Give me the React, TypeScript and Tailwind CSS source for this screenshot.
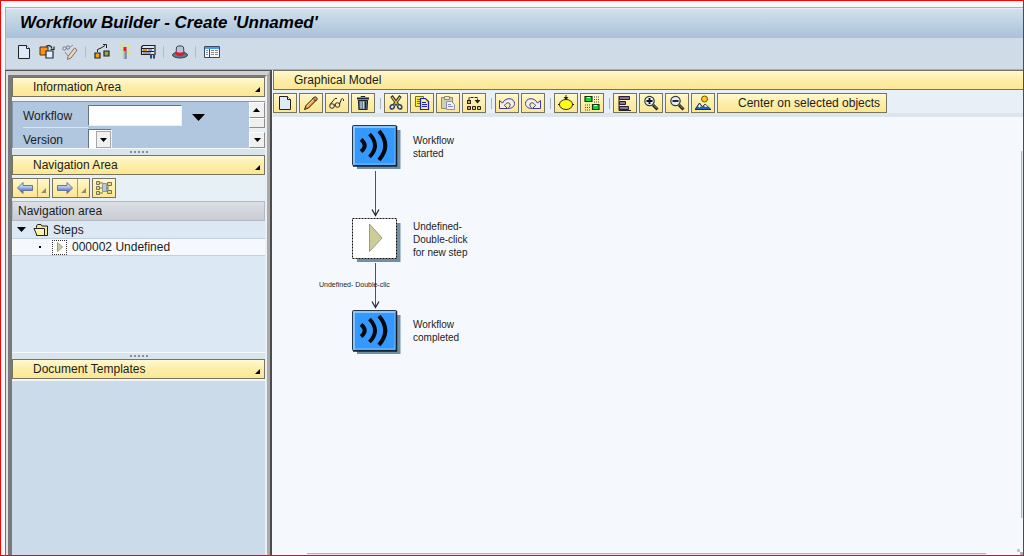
import React, { useState } from 'react';

interface IconProps {
  children: React.ReactNode;
  size?: number;
}

function Icon({ children, size = 16 }: IconProps) {
  return (
    <svg width={size} height={size} viewBox="0 0 16 16" fill="none" className="shrink-0" aria-hidden="true">
      {children}
    </svg>
  );
}

/* ---------- Icons ---------- */

const NewDocIcon = ({ size = 16 }: { size?: number }) => (
  <Icon size={size}>
    <path d="M2.5 1.5h8l3 3v10h-11z" fill="#dceafa" stroke="#222" />
    <path d="M10.5 1.5v3h3" fill="#fff" stroke="#222" />
  </Icon>
);

const OtherObjectIcon = () => (
  <Icon>
    <path d="M1 3h8v8H1z" fill="#f7931e" stroke="#5a3200" />
    <path d="M7 7h7v7H7z" fill="#e3effc" stroke="#1d2b45" strokeWidth="1.2" />
    <path d="M7 2.5c2-1.500 5-1.500 6 2M15 2.500v3h-3.500" stroke="#222" strokeWidth="1.2" />
  </Icon>
);

const DisplayChangeIcon = () => (
  <Icon>
    <circle cx="2.5" cy="4.5" r="1.700" stroke="#777c82" />
    <circle cx="6" cy="3.500" r="1.700" stroke="#777c82" />
    <path d="M6 12.500 12.500 4l2.500 2L9 14l-3.500 1.500z" fill="#f2d6b5" stroke="#77726d" />
    <path d="M3 8l3 4M8 3l3-2" stroke="#8a8a8a" />
  </Icon>
);

const ActivateIcon = () => (
  <Icon>
    <path d="M1 9h5v5H1z" fill="#f7a11e" stroke="#222" strokeWidth="1.2" />
    <path d="M10 7h5v5h-5z" fill="#8fae4a" stroke="#222" strokeWidth="1.2" />
    <path d="M3.500 8V5.500L7 4l4-2.500M9 .500h3.500V4" stroke="#222" />
  </Icon>
);

const WandIcon = () => (
  <Icon>
    <path d="M3 1l3 3M13 1l-3 3M3 10l3-3M13 10l-3-3M1.500 5.500H5M11 5.500h3.500M8 0v2" stroke="#ecec2c" strokeWidth="1.2" />
    <path d="M6.500 3h3v4h-3z" fill="#f01818" />
    <path d="M6.500 7h3v8h-3z" fill="#9db0bd" />
    <path d="M9 7v8" stroke="#5a6c7a" />
  </Icon>
);

const TestIcon = () => (
  <Icon>
    <path d="M3 1.500h12v9H1.500V3z" fill="#dbe6f2" stroke="#222" strokeWidth="1.2" />
    <path d="M2 4.500h12M2 7.500h12" stroke="#222" />
    <path d="M3 5h4v2H3z" fill="#f28c1c" />
    <path d="M8 5h4v2H8z" fill="#8d9fc4" />
    <path d="M3 9h8" stroke="#556" />
    <path d="M11 10v4.500M14 10v4.500" stroke="#35456b" strokeWidth="2" />
  </Icon>
);

const HatIcon = () => (
  <Icon>
    <ellipse cx="8" cy="11" rx="7.500" ry="3" fill="#68748c" stroke="#3b4459" />
    <path d="M4 9.500 4.500 3c1-1.500 6-1.500 7 0l.500 6.500c-1 2-7 2-8 0z" fill="#b9c4d6" stroke="#3b4459" />
    <path d="M4 7.500c2 1.500 6 1.500 8 0v3c-2 1.500-6 1.500-8 0z" fill="#d8202c" />
  </Icon>
);

const LayoutIcon = () => (
  <Icon>
    <path d="M.500 2.500h15v11H.500z" fill="#f7fafc" stroke="#334a66" />
    <path d="M1 3h14v2H1z" fill="#4aa0e6" />
    <path d="M5.500 5v8" stroke="#334a66" />
    <path d="M2 6.500h2M2 8.500h2M2 10.500h2M7 6.500h3M11 6.500h3M7 8.500h3M11 8.500h3M7 10.500h3M11 10.500h3" stroke="#888" />
  </Icon>
);

const PencilIcon = () => (
  <Icon>
    <path d="M1.500 14.500 3 10.500l8-8L13.500 5l-8 8z" fill="#f5a23a" stroke="#2b1c10" />
    <path d="M10 3.500 11.500 2c1-1 3.500 1.500 2.500 2.500L12.500 6z" fill="#e0907a" stroke="#2b1c10" />
    <path d="M4 11l6.500-6.500" stroke="#ffe1a3" />
  </Icon>
);

const GlassesIcon = () => (
  <Icon>
    <circle cx="3" cy="11" r="2.300" stroke="#2b2b2b" />
    <circle cx="8.500" cy="10" r="2.300" stroke="#2b2b2b" />
    <path d="M1 9.500 6 3.500h2M5 10h1M10.500 9l2-5c1-1 2.500 0 2 2" stroke="#2b2b2b" />
  </Icon>
);

const TrashIcon = () => (
  <Icon>
    <path d="M3.500 5.500h9l-.500 9h-8z" fill="#6c7a8e" stroke="#1c2430" strokeWidth="1.2" />
    <path d="M2 3.500h12" stroke="#1c2430" strokeWidth="2" />
    <path d="M6 2V1.500h4V2" stroke="#1c2430" />
    <path d="M6 6.500v7M8.500 6.500v7" stroke="#c9d4df" />
    <path d="M10.500 6.500v7" stroke="#1c2430" />
  </Icon>
);

const ScissorsIcon = () => (
  <Icon>
    <path d="M3.500 1 10 10M12.500 1 6 10" stroke="#333" strokeWidth="3" />
    <path d="M4 2l5.500 7.500M12 2 6.500 9.500" stroke="#e8cf3a" strokeWidth="1.200" />
    <path d="M6 10c-3-1-4.500 1-3.500 3.500 2.500 1.500 4-.500 4-3M10 10c3-1 4.500 1 3.500 3.500-2.500 1.500-4-.500-4-3" stroke="#24407e" strokeWidth="1.600" />
  </Icon>
);

const CopyIcon = () => (
  <Icon>
    <path d="M1.500 1.500h8v10h-8z" fill="#f5ee35" stroke="#77731a" />
    <path d="M3 4.500h3M3 6.500h3M3 8.500h3" stroke="#77731a" />
    <path d="M6.500 3.500h5l3 3v8h-8z" fill="#f7f07a" stroke="#2222b0" strokeWidth="1.2" />
    <path d="M8 7.500h4M8 9.500h5M8 11.500h5" stroke="#2222b0" />
  </Icon>
);

const PasteIcon = () => (
  <Icon>
    <path d="M1.500 2.500h11v11h-11z" fill="#d2cfae" stroke="#8d8a70" />
    <path d="M4.500 1.500h5v3h-5z" fill="#ece8cf" stroke="#8d8a70" />
    <path d="M6.500 6.500h5l3 3v5h-8z" fill="#eef0f5" stroke="#8a8dc4" />
    <path d="M8 9.500h3M8 11.500h5" stroke="#8a8dc4" />
  </Icon>
);

const InsertStepsIcon = () => (
  <Icon>
    <path d="M3 5V2.500h8.500V6" stroke="#222" strokeDasharray="3 1" />
    <path d="M8.500 5h6l-3 3.500z" fill="#222" />
    <path d="M1 5h4v4H1z" fill="#222" />
    <path d="M2 6h2v2H2z" fill="#f3a52b" />
    <path d="M1.500 11.500h3v3h-3z" fill="#f7931e" stroke="#222" />
    <path d="M6.500 11.500h3v3h-3zM11.500 11.500h3v3h-3z" fill="#c9d66a" stroke="#222" />
  </Icon>
);

const undoPath = 'M.500 5.500v8h8L5.500 10.500C7 7.500 10 7 11 9c.500 1.500-.500 3-2 4.500 4 0 6.500-2 6.500-5C15.500 3.500 7.500 1 3.500 8z';

const UndoIcon = () => (
  <Icon>
    <path d={undoPath} fill="#f3efe6" stroke="#3a3a94" />
  </Icon>
);

const RedoIcon = () => (
  <Icon>
    <g transform="matrix(-1 0 0 1 16 0)">
      <path d={undoPath} fill="#f3efe6" stroke="#3a3a94" />
    </g>
  </Icon>
);

const NodeIcon = () => (
  <Icon>
    <ellipse cx="8" cy="9.500" rx="6.500" ry="5" fill="#ffff10" stroke="#222" />
    <path d="M0 9.500h2M14 9.500h2M8 0v4" stroke="#222" />
    <path d="M5.500 2h5L8 5z" fill="#222" />
  </Icon>
);

const BlocksIcon = () => (
  <Icon>
    <path d="M1 1.500h7v5H1z" fill="#18d32c" stroke="#12351a" strokeWidth="1.2" />
    <path d="M8.500 9.500h6.500v5H8.500z" fill="#18d32c" stroke="#12351a" strokeWidth="1.2" />
    <path d="M3 2.500h3M10 10.500h3" stroke="#d9ffd9" />
    <path d="M10 2h6M10 4.500h6M10 7h6M1 10h6M1 12.500h6M1 15h6" stroke="#444" strokeDasharray="1 1" />
  </Icon>
);

const AlignIcon = () => (
  <Icon>
    <path d="M2 1v14.500h12" stroke="#222" />
    <path d="M2.500 1.500h10v3h-10zM2.500 6.500h6v3h-6zM2.500 11.500h9v3h-9z" fill="#8b7496" stroke="#2b1f33" />
  </Icon>
);

const ZoomIcon = ({ plus }: { plus?: boolean }) => (
  <Icon>
    <path d="M10 10l4.500 4.500" stroke="#222" strokeWidth="3" />
    <path d="M11 10.500l3 3" stroke="#b09a5c" />
    <circle cx="6.500" cy="6" r="4.700" fill="#e6eef7" stroke="#33383f" strokeWidth="1.2" />
    <path d={plus ? 'M3.500 6h6M6.500 3v6' : 'M3.500 6h6'} stroke="#111" strokeWidth="1.800" />
  </Icon>
);

const OverviewIcon = () => (
  <Icon>
    <circle cx="9.500" cy="4" r="3" fill="#ffcf1f" stroke="#75510a" />
    <path d="M0 14.500 4.500 8l3 4 2.500-3 6 5.500z" fill="#2465a8" stroke="#15314f" />
    <path d="M3 11.500 4.500 9l2.500 3.500-1.500-1-1 1zM9 11l1-1.500 2.500 2-2 .500z" fill="#fff" />
  </Icon>
);

const ArrowIcon = ({ left }: { left?: boolean }) => (
  <Icon>
    <defs>
      <linearGradient id={left ? 'arrow-l' : 'arrow-r'} x1="0" y1="0" x2="0" y2="1">
        <stop offset="0.3" stopColor="#bfe0f5" />
        <stop offset="0.8" stopColor="#5b62d6" />
      </linearGradient>
    </defs>
    <path
      d={left ? 'M.500 8 6 2.500v3h9.500v5H6v3z' : 'M15.500 8 10 2.500v3H.500v5H10v3z'}
      fill={left ? 'url(#arrow-l)' : 'url(#arrow-r)'}
      stroke="#6a7390"
    />
  </Icon>
);

const HierarchyIcon = () => (
  <Icon>
    <path d="M4 3h3M4 8h3M4 13h3M10 8h2M12 4v9" stroke="#77735a" />
    <path d="M.500 1.500h3v3h-3zM.500 6.500h3v3h-3zM.500 11.500h3v3h-3zM11.500 2.500h4v3h-4zM11.500 10.500h4v3h-4z" fill="#ead98a" stroke="#77735a" />
    <path d="M6.500 3.500h4v8h-4z" fill="#b8c8d8" stroke="#8b96a3" />
  </Icon>
);

const FolderIcon = () => (
  <Icon>
    <path d="M3.500 5.500V3.500L5 2.500h3l1 1.500h5.500v9.500h-11z" fill="#f6e890" stroke="#222" />
    <path d="M1 6.500h10.500v7H4z" fill="#fff6a5" stroke="#222" />
  </Icon>
);

const DownTriangle = ({ width = 7, height = 4 }: { width?: number; height?: number }) => (
  <svg width={width} height={height} viewBox="0 0 8 4" preserveAspectRatio="none" aria-hidden="true">
    <path d="M0 0h8L4 4z" fill="#000" />
  </svg>
);

const Corner = ({ color = '#000' }: { color?: string }) => (
  <svg width="5" height="5" viewBox="0 0 5 5" aria-hidden="true">
    <path d="M5 0v5H0z" fill={color} />
  </svg>
);

/* ---------- Data ---------- */

interface Tool {
  label: string;
  icon: React.ReactNode;
}

const appTools: Tool[][] = [
  [
    { label: 'Create', icon: <NewDocIcon /> },
    { label: 'Other workflow', icon: <OtherObjectIcon /> },
    { label: 'Display/Change', icon: <DisplayChangeIcon /> },
  ],
  [
    { label: 'Check', icon: <ActivateIcon /> },
    { label: 'Activate', icon: <WandIcon /> },
    { label: 'Test', icon: <TestIcon /> },
  ],
  [{ label: 'Basic data', icon: <HatIcon /> }],
  [{ label: 'Layout', icon: <LayoutIcon /> }],
];

const modelTools: Tool[][] = [
  [
    { label: 'Create step', icon: <NewDocIcon /> },
    { label: 'Change step', icon: <PencilIcon /> },
    { label: 'Display step', icon: <GlassesIcon /> },
    { label: 'Delete', icon: <TrashIcon /> },
  ],
  [
    { label: 'Cut', icon: <ScissorsIcon /> },
    { label: 'Copy', icon: <CopyIcon /> },
    { label: 'Paste', icon: <PasteIcon /> },
    { label: 'Insert steps', icon: <InsertStepsIcon /> },
  ],
  [
    { label: 'Undo', icon: <UndoIcon /> },
    { label: 'Redo', icon: <RedoIcon /> },
  ],
  [
    { label: 'Start events', icon: <NodeIcon /> },
    { label: 'Blocks', icon: <BlocksIcon /> },
  ],
  [
    { label: 'Align', icon: <AlignIcon /> },
    { label: 'Zoom in', icon: <ZoomIcon plus /> },
    { label: 'Zoom out', icon: <ZoomIcon /> },
    { label: 'Overview', icon: <OverviewIcon /> },
  ],
];

const yellow =
  'bg-linear-to-b from-[#fff8d2] via-[#fdeea8] to-[#fbe794] border border-[#77735c]';

/* ---------- Parts ---------- */

function PaneHeader({ title }: { title: string }) {
  return (
    <button type="button" className={`relative flex h-5 w-full items-center pl-5 text-xs ${yellow}`}>
      {title}
      <span className="absolute right-1 bottom-1">
        <Corner />
      </span>
    </button>
  );
}

function Splitter() {
  return (
    <div className="flex h-[7px] items-center justify-center border-t border-[#f5f9fc] bg-[#d9e5ec]">
      <svg width="18" height="2" viewBox="0 0 18 2" aria-hidden="true">
        <path d="M0 1h18" stroke="#8290a4" strokeWidth="2" strokeDasharray="2 2" />
      </svg>
    </div>
  );
}

function InformationArea() {
  const [workflow, setWorkflow] = useState('');

  return (
    <div className="flex h-[47px] overflow-hidden border-t border-l border-[#8497ab] bg-[#b0c7df] text-xs">
      <div className="grow pt-[3px] pl-[10px]">
        <div className="flex h-6 items-start">
          <label htmlFor="workflow" className="h-[23px] w-[65px] border-b border-[#dbe6f1] leading-[23px]">
            Workflow
          </label>
          <input
            id="workflow"
            value={workflow}
            onChange={(e) => setWorkflow(e.target.value)}
            className="h-[21px] w-[94px] border border-t-[#66737f] border-r-[#eef2f6] border-b-[#eef2f6] border-l-[#66737f] bg-white px-1 outline-none"
          />
          <button type="button" aria-label="Select workflow" className="flex h-6 w-8 items-center justify-center">
            <DownTriangle width={13} height={7} />
          </button>
        </div>
        <div className="flex h-5 items-start">
          <label htmlFor="version" className="w-[65px] leading-[22px]">
            Version
          </label>
          <div className="relative">
            <select
              id="version"
              className="h-5 w-6 appearance-none border border-t-[#66737f] border-r-[#eef2f6] border-b-[#66737f] border-l-[#66737f] bg-white"
            />
            <span className="pointer-events-none absolute top-[2px] right-[1px] flex h-[17px] w-[15px] items-center justify-center border border-[#a7a7a7] bg-[#f1f1f1]">
              <DownTriangle />
            </span>
          </div>
        </div>
      </div>
      <div className="flex w-4 flex-col justify-between bg-[#e9eff5]">
        <div>
          <button type="button" aria-label="Scroll up" className="flex h-4 w-4 rotate-180 items-center justify-center border border-t-[#8c8c8c] border-l-[#8c8c8c] border-r-white border-b-white bg-[#f1f1f1]">
            <DownTriangle />
          </button>
          <div className="h-[10px] w-4 border border-white border-r-[#8c8c8c] border-b-[#8c8c8c] bg-[#efefef]"></div>
        </div>
        <button type="button" aria-label="Scroll down" className="flex h-4 w-4 items-center justify-center border border-white border-r-[#8c8c8c] border-b-[#8c8c8c] bg-[#f1f1f1]">
          <DownTriangle />
        </button>
      </div>
    </div>
  );
}

function HistoryButton({ left }: { left?: boolean }) {
  return (
    <div className={`flex h-5 w-[38px] ${yellow}`}>
      <button type="button" aria-label={left ? 'Back' : 'Forward'} className="flex grow items-center justify-center border-r border-[#a39f88]">
        <ArrowIcon left={left} />
      </button>
      <button type="button" aria-label={left ? 'Back history' : 'Forward history'} className="flex w-[11px] items-end justify-center pb-1">
        <Corner color="#8d8a7a" />
      </button>
    </div>
  );
}

function NavigationArea() {
  return (
    <>
      <div className="flex h-[26px] items-start gap-[2px] bg-[#e8f0f7] pt-[3px]">
        <HistoryButton left />
        <HistoryButton />
        <button type="button" aria-label="Hierarchy" className={`flex h-5 w-6 items-center justify-center ${yellow}`}>
          <HierarchyIcon />
        </button>
      </div>
      <div className="h-[151px] bg-[#dce8f4] text-xs">
        <div className="flex h-5 items-center border border-[#b3b9c2] bg-linear-to-b from-[#dcdfe4] to-[#c8ccd3] pl-[5px]">
          Navigation area
        </div>
        <ul>
          <li>
            <div className="flex h-[17px] items-center pl-[5px]">
              <button type="button" aria-label="Collapse Steps" className="mr-[7px]">
                <DownTriangle width={9} height={5} />
              </button>
              <FolderIcon />
              <span className="pl-1">Steps</span>
            </div>
            <ul>
              <li className="flex h-[18px] items-center border-y border-[#c2cfdc] bg-[#f5f9fd] pl-[27px]">
                <span className="mr-[11px] h-[2px] w-[2px] bg-black"></span>
                <span className="flex h-[15px] w-[15px] items-center justify-center border border-dotted border-[#333] bg-white">
                  <svg width="6" height="10" viewBox="0 0 6 10" aria-hidden="true">
                    <path d="M.5.5 5.500 5l-5 4.500z" fill="#c9c99a" stroke="#999a80" />
                  </svg>
                </span>
                <span className="pl-[5px]">000002 Undefined</span>
              </li>
            </ul>
          </li>
        </ul>
      </div>
    </>
  );
}

function EventNode() {
  return (
    <svg width="50" height="46" viewBox="0 0 50 46" aria-hidden="true">
      <path d="M5 5h43.500v39H5z" fill="#708fa2" />
      <rect x=".5" y=".5" width="44" height="40" rx="1" fill="#3399ff" stroke="#24384c" />
      <path d="M2 40V2h42" stroke="#a5d2f7" strokeWidth="1.5" fill="none" />
      <path d="M43 2v37H2" stroke="#7fbdf5" fill="none" />
      <path d="M44.500 1v40H1" stroke="#10202f" strokeWidth="1.5" fill="none" />
      <path d="M9 14.500q7.500 6 0 12" stroke="#04080c" strokeWidth="4" fill="none" />
      <path d="M17.500 9q11 11.500 0 23" stroke="#04080c" strokeWidth="3.800" fill="none" />
      <path d="M27 6q12.500 14.500 0 29" stroke="#04080c" strokeWidth="4" fill="none" />
    </svg>
  );
}

function UndefinedNode() {
  return (
    <svg width="50" height="46" viewBox="0 0 50 46" aria-hidden="true">
      <path d="M5 5h43.500v39H5z" fill="#708fa2" />
      <rect x=".5" y=".5" width="44" height="40" fill="#fff" stroke="#111" strokeDasharray="2 1" />
      <path d="M17.500 6 30 20 17.500 33.500z" fill="#cccc99" stroke="#9a9a86" />
    </svg>
  );
}

function FlowArrow() {
  return (
    <svg width="9" height="46" viewBox="0 0 9 46" fill="none" aria-hidden="true">
      <path d="M4.500 0v44" stroke="#4d5357" />
      <path d="M1 38.500 4.500 44.500 8 38.500" stroke="#222" strokeWidth="1.2" />
    </svg>
  );
}

function Canvas() {
  return (
    <div className="relative grow overflow-hidden bg-[#f5f9fd] text-[10px] leading-[13px]">
      <div className="absolute top-2 left-[79px]">
        <EventNode />
      </div>
      <p className="absolute top-[17px] left-[140px]">
        Workflow
        <br />
        started
      </p>
      <div className="absolute top-[54px] left-[98px]">
        <FlowArrow />
      </div>
      <div className="absolute top-[101px] left-[79px]">
        <UndefinedNode />
      </div>
      <p className="absolute top-[103px] left-[140px]">
        Undefined-
        <br />
        Double-click
        <br />
        for new step
      </p>
      <div className="absolute top-[146px] left-[98px]">
        <FlowArrow />
      </div>
      <p className="absolute top-[161px] left-[46px] text-[7px] whitespace-nowrap">Undefined- Double-clic</p>
      <div className="absolute top-[193px] left-[79px]">
        <EventNode />
      </div>
      <p className="absolute top-[201px] left-[140px]">
        Workflow
        <br />
        completed
      </p>

      {/* Scroll tracks of the drawing area */}
      <div className="absolute top-[34px] right-0 bottom-[37px] w-[2px] border-l border-[#a9b9c4] bg-[#dfe8ee]"></div>
      <div className="absolute right-[37px] bottom-0 left-[34px] h-[2px] border-t border-[#a9b9c4] bg-[#dfe8ee]"></div>
      <div className="absolute right-[3px] bottom-[3px] h-[3px] w-[3px] bg-[#c6c6c6]"></div>
      <div className="absolute right-0 bottom-0 h-[3px] w-[3px] bg-[#b0b0b0]"></div>
    </div>
  );
}

export default function App() {
  return (
    <div className="flex h-screen flex-col overflow-hidden border border-[#ff0000] bg-[#f7f9fb] pt-[6px] pl-1 font-['Liberation_Sans',Arial,sans-serif] text-[#1c1c1c]">
      <header className="border-t border-b border-l border-[#9fb0c0] bg-[#cfdce7]">
        <h1 className="flex h-[30px] items-center border-t border-[#e6eef5] bg-linear-to-b from-[#d2e0ec] to-[#aac1d9] pb-[2px] pl-[14px] text-[17px] font-bold italic text-black">
          Workflow Builder - Create 'Unnamed'
        </h1>
        <div className="flex h-[31px] items-center pb-1 pl-[6px]">
          {appTools.map((group, idx) => (
            <React.Fragment key={idx}>
              {idx > 0 && (
                <span className="flex w-[9px] justify-center">
                  <span className="h-3 w-px bg-[#a9bfd4]"></span>
                </span>
              )}
              {group.map((tool) => (
                <button key={tool.label} type="button" aria-label={tool.label} className="flex h-6 w-[23px] items-center justify-center">
                  {tool.icon}
                </button>
              ))}
            </React.Fragment>
          ))}
        </div>
      </header>

      <div className="flex min-h-0 grow">
        {/* Left side: stacked panes inside a double frame */}
        <aside className="flex w-[267px] shrink-0 border-t border-r-2 border-l border-t-[#4f5358] border-r-[#4c4c4c] border-l-[#6c6c6c]">
          <div className="flex grow border-t-4 border-r-[3px] border-l-2 border-t-[#cfd1d3] border-r-[#aaaaaa] border-l-[#e3e3e3]">
            <div className="flex grow flex-col border-t-2 border-r-2 border-l-4 border-t-[#77797b] border-r-[#eceff2] border-l-[#77797b] bg-[#ccdbe9]">
              <PaneHeader title="Information Area" />
              <div className="h-1 bg-[#f3f7fa]"></div>
              <InformationArea />
              <Splitter />
              <PaneHeader title="Navigation Area" />
              <NavigationArea />
              <Splitter />
              <PaneHeader title="Document Templates" />
              <div className="h-[2px] bg-[#f3f7fa]"></div>
            </div>
          </div>
        </aside>

        {/* Right side: graphical model */}
        <main className="flex min-w-0 grow flex-col border-l border-[#f5f9fd]">
          <h2 className={`flex h-5 items-center border-r-0 pl-5 text-xs ${yellow}`}>Graphical Model</h2>
          <div className="flex h-[27px] items-start border-b-4 border-[#dce6ec] bg-[#e8eff7] pt-[3px]">
            {modelTools.map((group, idx) => (
              <React.Fragment key={idx}>
                {idx > 0 && (
                  <span className="flex h-5 w-[7px] items-center justify-center">
                    <span className="h-[11px] w-px bg-[#a9b4bd]"></span>
                  </span>
                )}
                {group.map((tool) => (
                  <button key={tool.label} type="button" aria-label={tool.label} className={`mr-[2px] flex h-5 w-6 items-center justify-center ${yellow}`}>
                    {tool.icon}
                  </button>
                ))}
              </React.Fragment>
            ))}
            <button type="button" className={`flex h-5 items-center pr-[6px] pl-5 text-xs ${yellow}`}>
              Center on selected objects
            </button>
          </div>
          <Canvas />
        </main>
      </div>
    </div>
  );
}
